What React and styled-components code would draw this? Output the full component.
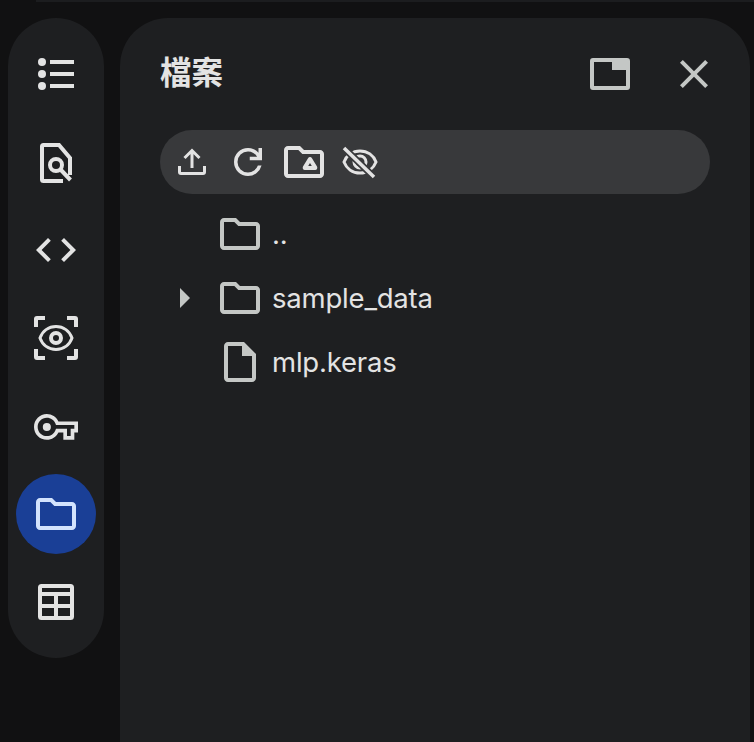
import React from "react";
import styled, { createGlobalStyle } from "styled-components";
import {
  MdCode,
  MdOutlineFolder,
  MdOutlineInsertDriveFile,
  MdClose,
  MdArrowRight,
} from "react-icons/md";

const Global = createGlobalStyle`
  html, body { margin: 0; padding: 0; background: #111112; }
  body { width: 754px; height: 742px; overflow: hidden; font-family: Inter, "Noto Sans CJK TC", sans-serif; }
`;

const Page = styled.div`
  position: relative;
  width: 754px;
  height: 742px;
  box-sizing: border-box;
  padding: 18px 4px 0 8px;
  display: flex;
  align-items: flex-start;
  gap: 16px;
  background: #111112;
  overflow: hidden;
`;

const TopEdge = styled.div`
  position: absolute;
  top: 0;
  left: 36px;
  right: 0;
  height: 2px;
  background: #1c1d1f;
`;

const Rail = styled.nav`
  width: 96px;
  height: 640px;
  flex: none;
  box-sizing: border-box;
  padding: 16px 8px;
  display: flex;
  flex-direction: column;
  gap: 8px;
  background: #1e1f21;
  border-radius: 48px;
`;

const RailItem = styled.div`
  width: 80px;
  height: 80px;
  border-radius: 50%;
  display: flex;
  align-items: center;
  justify-content: center;
  color: ${(p) => (p.$active ? "#d3e3fd" : "#e3e3e3")};
  background: ${(p) => (p.$active ? "#1a3f96" : "transparent")};
`;

const Panel = styled.section`
  flex: 1;
  height: 760px;
  box-sizing: border-box;
  padding: 32px 40px 0;
  background: #1e1f21;
  border-radius: 48px 48px 0 0;
`;

const Header = styled.header`
  display: flex;
  align-items: center;
  height: 48px;
  margin-bottom: 32px;
`;

const Title = styled.h2`
  flex: 1;
  margin: -8px 0 0;
  font-family: "Noto Sans CJK TC", sans-serif;
  font-size: 31.5px;
  font-weight: 700;
  color: #e3e3e3;
`;

const HeaderActions = styled.div`
  display: flex;
  align-items: center;
  gap: 40px;
  margin-right: -8px;
  color: #c4c7c5;
`;

const Toolbar = styled.div`
  width: 550px;
  height: 64px;
  box-sizing: border-box;
  padding: 0 8px;
  display: flex;
  align-items: center;
  gap: 8px;
  background: #38393b;
  border-radius: 32px;
  color: #e3e3e3;
`;

const ToolButton = styled.div`
  width: 48px;
  height: 48px;
  display: flex;
  align-items: center;
  justify-content: center;
`;

const Tree = styled.ul`
  list-style: none;
  margin: 8px 0 0;
  padding: 0;
`;

const Row = styled.li`
  display: flex;
  align-items: center;
  height: 64px;
  color: #c4c7c5;
`;

const Caret = styled.div`
  width: 48px;
  height: 48px;
  margin-right: 8px;
  display: flex;
  align-items: center;
`;

const RowIcon = styled.div`
  width: 48px;
  height: 48px;
  margin-right: 8px;
  display: flex;
  align-items: center;
  justify-content: center;
`;

const Name = styled.span`
  font-size: 27.5px;
  letter-spacing: -0.2px;
  color: #e3e3e3;
`;

function ListIcon() {
  return (
    <svg width="48" height="48" viewBox="0 0 48 48" fill="currentColor">
      <circle cx="10" cy="12" r="4" />
      <circle cx="10" cy="24" r="4" />
      <circle cx="10" cy="36" r="4" />
      <rect x="18" y="10" width="24" height="4" />
      <rect x="18" y="22" width="24" height="4" />
      <rect x="18" y="34" width="24" height="4" />
    </svg>
  );
}

function FindDoc() {
  return (
    <svg width="48" height="48" viewBox="0 0 48 48" fill="none" stroke="currentColor" strokeWidth="4">
      <path d="M31 43H11.500A1.500 1.500 0 0 1 10 41.500V8.500A1.500 1.500 0 0 1 11.500 7H27L38 20V37" />
      <circle cx="24" cy="27" r="6" />
      <path d="M28.500 31.500L38.500 42" />
    </svg>
  );
}

function Scan() {
  return (
    <svg width="48" height="48" viewBox="0 0 48 48" fill="none" stroke="currentColor">
      <path strokeWidth="4" d="M4 13V5a1 1 0 0 1 1-1h8M35 4h8a1 1 0 0 1 1 1v8M44 35v8a1 1 0 0 1-1 1h-8M13 44H5a1 1 0 0 1-1-1v-8" />
      <path strokeWidth="3" d="M24 12.500c7.500 0 13.500 4.500 16 11.500-2.500 7-8.500 11.500-16 11.500S10.500 31 8 24C10.500 17 16.500 12.500 24 12.500z" />
      <circle cx="24" cy="24" r="5" strokeWidth="4" />
    </svg>
  );
}

function KeyIcon() {
  return (
    <svg width="44" height="44" viewBox="0 -0.5 24 24" fill="currentColor">
      <path d="M22 19h-6v-4h-2.680c-1.140 2.420-3.600 4-6.320 4-3.860 0-7-3.140-7-7s3.140-7 7-7c2.720 0 5.170 1.580 6.320 4H24v6h-2v4zm-4-2h2v-4h2v-2H11.980l-.23-.67C11.050 8.340 9.150 7 7 7c-2.760 0-5 2.240-5 5s2.240 5 5 5c2.150 0 4.050-1.340 4.750-3.330l.23-.67H18v4z" />
      <circle cx="7" cy="12" r="2.200" />
    </svg>
  );
}

function TableIcon() {
  return (
    <svg width="48" height="48" viewBox="0 0 48 48" fill="none" stroke="currentColor" strokeWidth="4">
      <rect x="8" y="8" width="32" height="32" rx="1.500" />
      <path d="M8 16h32M8 28h32M24 16v24" />
    </svg>
  );
}

function UploadIcon() {
  return (
    <svg width="48" height="48" viewBox="0 0 48 48" fill="none" stroke="currentColor" strokeWidth="3">
      <path d="M11.500 28v6a1.500 1.500 0 0 0 1.500 1.500h22a1.500 1.500 0 0 0 1.500-1.500v-6" />
      <path d="M24 30V13M16.500 20L24 12.500L31.500 20" />
    </svg>
  );
}

function RefreshIcon() {
  return (
    <svg width="42" height="42" viewBox="0 -960 960 960" fill="currentColor">
      <path d="M480-160q-134 0-227-93t-93-227q0-134 93-227t227-93q69 0 132 28.500T720-690v-110h80v280H520v-80h168q-32-56-87.500-88T480-720q-100 0-170 70t-70 170q0 100 70 170t170 70q77 0 139-44t87-116h84q-28 106-114 173t-196 67Z" />
    </svg>
  );
}

function DriveFolder() {
  return (
    <svg width="48" height="48" viewBox="0 0 24 24" fill="currentColor">
      <path d="M20 6h-8l-2-2H4c-1.100 0-2 .9-2 2v12c0 1.100.9 2 2 2h16c1.100 0 2-.9 2-2V8c0-1.100-.9-2-2-2zm0 12H4V6h5.170l2 2H20v10z" />
      <path fillRule="evenodd" d="M15 9.500c.4 0 .7.2.9.5l2.600 4.200c.4.700 0 1.800-.9 1.800h-5.200c-.9 0-1.300-1.100-.9-1.800l2.600-4.200c.2-.3.5-.5.9-.5zM15 12.500l-.9 1.500h1.800z" />
    </svg>
  );
}

function EyeOff() {
  return (
    <svg width="48" height="48" viewBox="0 0 48 48" fill="none" stroke="currentColor" strokeWidth="3">
      <path d="M24 13c7.500 0 13.500 4.500 16 11-2.500 6.500-8.500 11-16 11S10.500 30.500 8 24c2.500-6.500 8.500-11 16-11z" />
      <circle cx="24" cy="24" r="6" />
      <path stroke="#38393b" strokeWidth="7" d="M8 10l30 29" />
      <path strokeWidth="3.500" d="M8 10l30 29" />
    </svg>
  );
}

function Pip() {
  return (
    <svg width="40" height="32" viewBox="0 0 40 32" fill="currentColor">
      <path fillRule="evenodd" d="M3 0h34a3 3 0 0 1 3 3v26a3 3 0 0 1-3 3H3a3 3 0 0 1-3-3V3a3 3 0 0 1 3-3zM4 4v24h32V12H22V4z" />
    </svg>
  );
}

const railIcons = [
  <ListIcon />,
  <FindDoc />,
  <MdCode size={48} />,
  <Scan />,
  <KeyIcon />,
  <MdOutlineFolder size={48} />,
  <TableIcon />,
];

export default function App() {
  return (
    <Page>
      <Global />
      <TopEdge />
      <Rail>
        {railIcons.map((icon, i) => (
          <RailItem key={i} $active={i === 5}>{icon}</RailItem>
        ))}
      </Rail>
      <Panel>
        <Header>
          <Title>檔案</Title>
          <HeaderActions>
            <Pip />
            <MdClose size={48} />
          </HeaderActions>
        </Header>
        <Toolbar>
          <ToolButton><UploadIcon /></ToolButton>
          <ToolButton><RefreshIcon /></ToolButton>
          <ToolButton><DriveFolder /></ToolButton>
          <ToolButton><EyeOff /></ToolButton>
        </Toolbar>
        <Tree>
          <Row>
            <Caret />
            <RowIcon><MdOutlineFolder size={48} /></RowIcon>
            <Name>..</Name>
          </Row>
          <Row>
            <Caret><MdArrowRight size={48} /></Caret>
            <RowIcon><MdOutlineFolder size={48} /></RowIcon>
            <Name>sample_data</Name>
          </Row>
          <Row>
            <Caret />
            <RowIcon><MdOutlineInsertDriveFile size={48} /></RowIcon>
            <Name>mlp.keras</Name>
          </Row>
        </Tree>
      </Panel>
    </Page>
  );
}
